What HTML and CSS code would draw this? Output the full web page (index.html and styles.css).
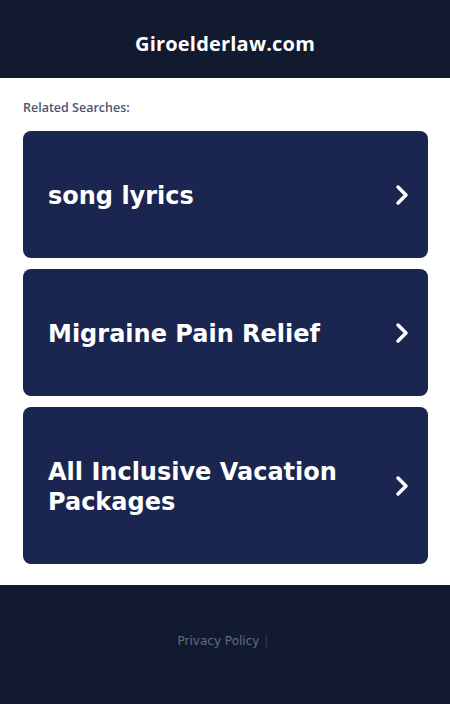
FILE: index.html
```html
<!DOCTYPE html>
<html lang="en">
<head>
    <meta charset="UTF-8">
    <meta name="viewport" content="width=device-width, initial-scale=1.0">
    <title>Giroelderlaw.com</title>
    <link rel="stylesheet" href="styles.css">
</head>
<body>
    <header class="site-header">
        <h1>Giroelderlaw.com</h1>
    </header>
    <main class="content">
        <p class="related-title">Related Searches:</p>
        <a class="search-card" href="#">
            <span class="search-text">song lyrics</span>
            <svg class="chevron" viewBox="0 0 16 24" width="16" height="24"><path d="M4 4 L12 12 L4 20" fill="none" stroke="#fff" stroke-width="3.5" stroke-linecap="round" stroke-linejoin="round"/></svg>
        </a>
        <a class="search-card" href="#">
            <span class="search-text">Migraine Pain Relief</span>
            <svg class="chevron" viewBox="0 0 16 24" width="16" height="24"><path d="M4 4 L12 12 L4 20" fill="none" stroke="#fff" stroke-width="3.5" stroke-linecap="round" stroke-linejoin="round"/></svg>
        </a>
        <a class="search-card" href="#">
            <span class="search-text">All Inclusive Vacation Packages</span>
            <svg class="chevron" viewBox="0 0 16 24" width="16" height="24"><path d="M4 4 L12 12 L4 20" fill="none" stroke="#fff" stroke-width="3.5" stroke-linecap="round" stroke-linejoin="round"/></svg>
        </a>
    </main>
    <footer class="site-footer">
        <a href="#">Privacy Policy</a><span class="sep">|</span>
    </footer>
</body>
</html>
```

FILE: styles.css
```css
body {
    margin: 0;
    padding: 0;
    background-color: #fff;
    font-family: "DejaVu Sans", sans-serif;
}
.site-header {
    background-color: #111a2f;
    height: 78px;
    display: flex;
    align-items: center;
    justify-content: center;
}
.site-header h1 {
    margin: 0;
    color: #fff;
    font-family: "Open Sans", sans-serif;
    font-weight: 700;
    font-size: 20px;
    letter-spacing: 0.2px;
    padding-top: 8px;
}
.content {
    padding: 21px 22px 21px 23px;
    display: flex;
    flex-direction: column;
    gap: 11px;
}
.related-title {
    margin: 0 0 4px;
    font-family: "Open Sans", sans-serif;
    font-weight: 600;
    font-size: 12.5px;
    color: #4b5571;
    line-height: 17px;
}
.search-card {
    display: flex;
    align-items: center;
    justify-content: space-between;
    background-color: #1b2650;
    border-radius: 8px;
    padding: 50px 18px 47px 25px;
    text-decoration: none;
}
.search-text {
    color: #fff;
    font-weight: bold;
    font-size: 24px;
    line-height: 30px;
    max-width: 320px;
}
.chevron {
    flex-shrink: 0;
    margin-top: -2px;
}
.site-footer {
    background-color: #111a2f;
    height: 119px;
    box-sizing: border-box;
    padding: 0 4px 8px 0;
    display: flex;
    align-items: center;
    justify-content: center;
    font-size: 12px;
}
.site-footer a {
    color: #646c82;
    text-decoration: none;
}
.sep {
    color: #3a4256;
    margin-left: 5px;
}
```
